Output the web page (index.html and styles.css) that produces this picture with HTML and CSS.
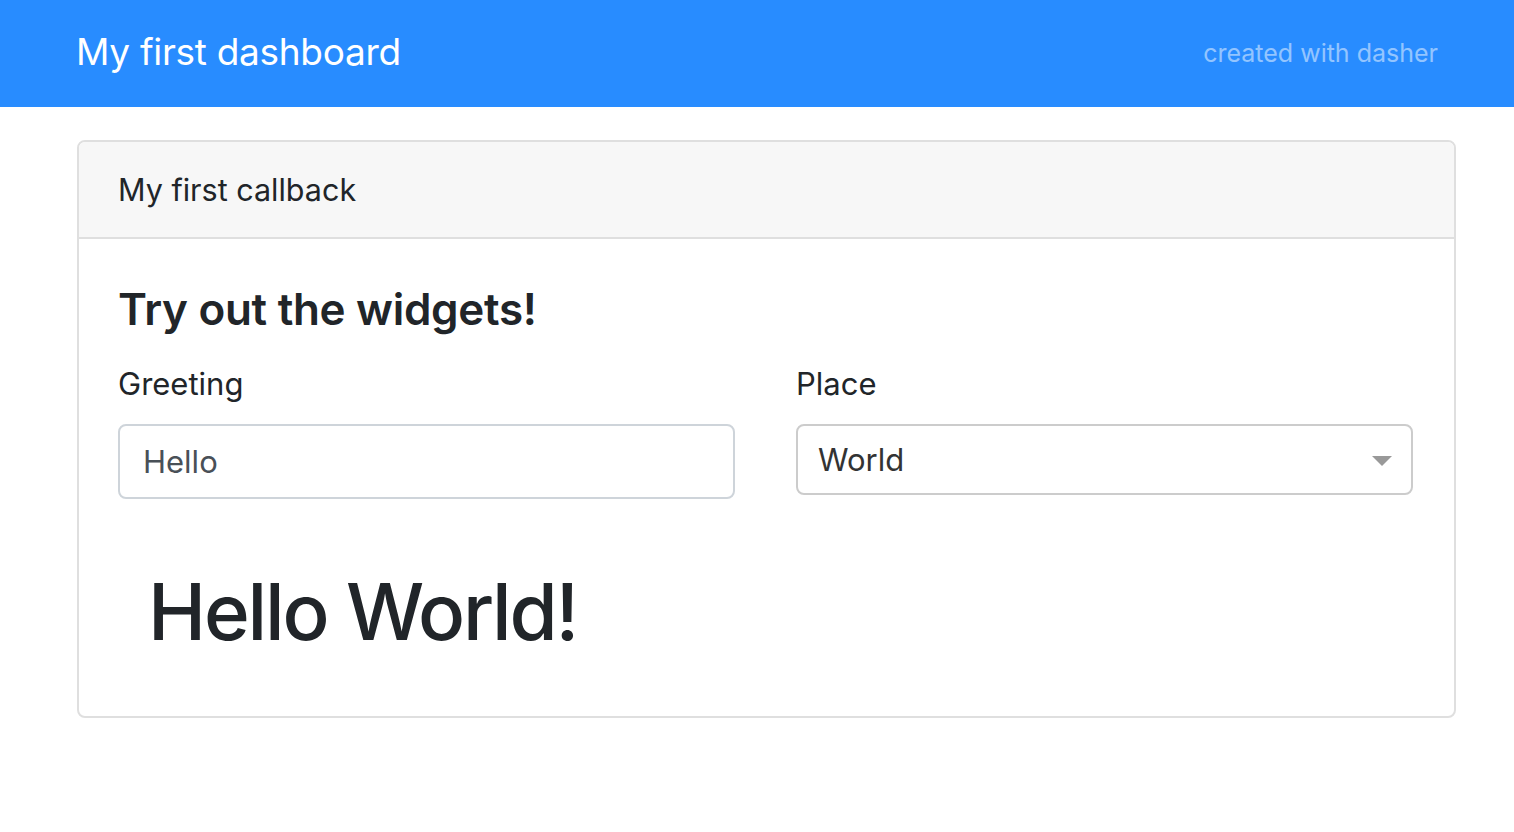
FILE: index.html
```html
<!DOCTYPE html>
<html lang="en">
<head>
<meta charset="utf-8">
<title>My first dashboard</title>
<link rel="stylesheet" href="styles.css">
</head>
<body>
<header class="navbar">
  <div class="brand">My first dashboard</div>
  <div class="credit">created with dasher</div>
</header>
<main class="page">
  <section class="card">
    <div class="card-header">My first callback</div>
    <div class="card-body">
      <h2 class="widgets-title">Try out the widgets!</h2>
      <div class="widget-row">
        <div class="widget">
          <label class="widget-label">Greeting</label>
          <div class="text-input">Hello</div>
        </div>
        <div class="widget">
          <label class="widget-label">Place</label>
          <div class="select">
            <span class="select-value">World</span>
            <span class="select-arrow"></span>
          </div>
        </div>
      </div>
      <div class="output">Hello World!</div>
    </div>
  </section>
</main>
</body>
</html>
```
FILE: styles.css
```css
* { box-sizing: border-box; }
html, body { margin: 0; padding: 0; }
body {
  font-family: "Inter", "Liberation Sans", sans-serif;
  color: #212529;
  background: #fff;
}
.navbar {
  height: 107px;
  background: #288cff;
  display: flex;
  align-items: center;
  justify-content: space-between;
  padding: 0 76px 4px 76px;
}
.brand {
  color: #fff;
  font-size: 37px;
  font-weight: 400;
  letter-spacing: -0.3px;
}
.credit {
  color: rgba(255,255,255,0.5);
  font-size: 25px;
  padding-top: 2px;
}
.page {
  padding: 33px 0 0 77px;
}
.card {
  width: 1379px;
  border: 2px solid #dfdfdf;
  border-radius: 8px;
  overflow: hidden;
}
.card-header {
  height: 97px;
  background: #f7f7f7;
  border-bottom: 2px solid #dfdfdf;
  display: flex;
  align-items: center;
  padding: 0 39px;
  font-size: 30.5px;
  padding-bottom: 1px;
}
.card-body {
  padding: 42px 39px 54px 39px;
}
.widgets-title {
  margin: 0;
  font-size: 44px;
  font-weight: 600;
  line-height: 56px;
  letter-spacing: -0.3px;
}
.widget-row {
  display: grid;
  grid-template-columns: 617px 617px;
  column-gap: 61px;
  margin-top: 23px;
}
.widget-label {
  display: block;
  font-size: 31px;
  line-height: 48px;
}
.text-input {
  margin-top: 16px;
  height: 75px;
  border: 2px solid #ced4da;
  border-radius: 8px;
  padding: 0 23px;
  display: flex;
  align-items: center;
  font-size: 31px;
  color: #495057;
}
.select {
  margin-top: 16px;
  height: 71px;
  border: 2px solid #cccccc;
  border-radius: 8px;
  padding: 0 20px;
  display: flex;
  align-items: center;
  justify-content: space-between;
  font-size: 31px;
  color: #333;
}
.select-arrow {
  width: 0;
  height: 0;
  border-left: 10px solid transparent;
  border-right: 10px solid transparent;
  border-top: 10px solid #999;
  margin-right: -1px;
  margin-top: 2px;
}
.output {
  margin-top: 63px;
  padding-left: 30px;
  font-size: 78px;
  font-weight: 500;
  line-height: 100px;
  letter-spacing: -2.2px;
}
```
